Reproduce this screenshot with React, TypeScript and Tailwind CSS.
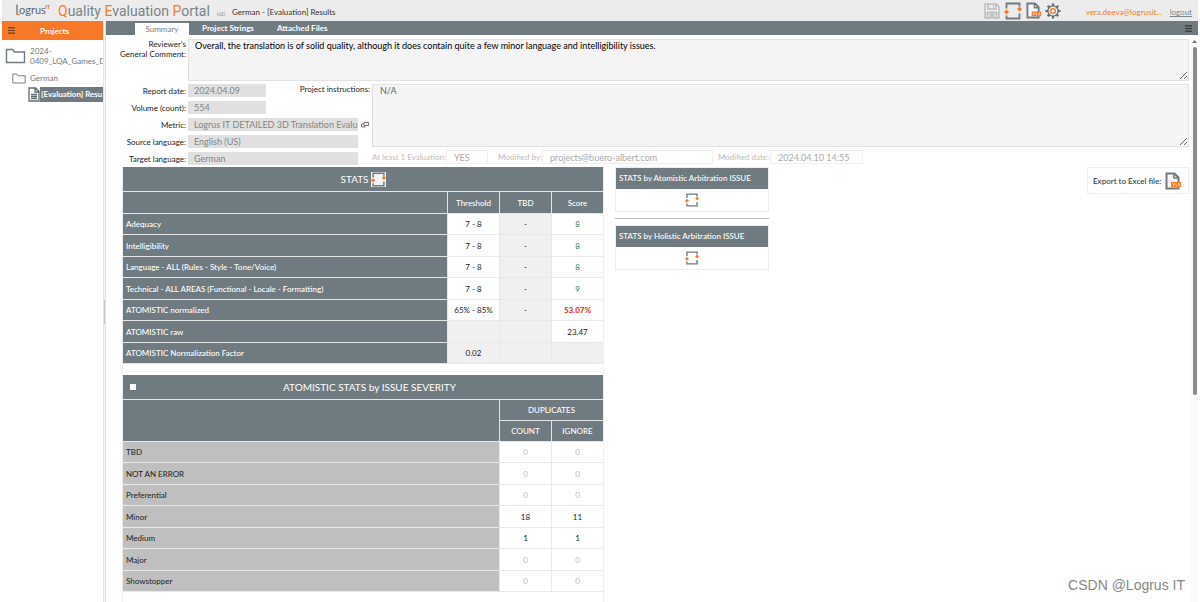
import { Menu } from "lucide-react";

type Tone = "plain" | "green" | "red";

interface StatRow {
  label: string;
  threshold: string;
  tbd: string;
  score: string;
  tone: Tone;
}

const statRows: StatRow[] = [
  { label: "Adequacy", threshold: "7 - 8", tbd: "-", score: "8", tone: "green" },
  { label: "Intelligibility", threshold: "7 - 8", tbd: "-", score: "8", tone: "green" },
  { label: "Language - ALL (Rules - Style - Tone/Voice)", threshold: "7 - 8", tbd: "-", score: "8", tone: "green" },
  { label: "Technical - ALL AREAS (Functional - Locale - Formatting)", threshold: "7 - 8", tbd: "-", score: "9", tone: "green" },
  { label: "ATOMISTIC normalized", threshold: "65% - 85%", tbd: "-", score: "53.07%", tone: "red" },
  { label: "ATOMISTIC raw", threshold: "", tbd: "", score: "23.47", tone: "plain" },
  { label: "ATOMISTIC Normalization Factor", threshold: "0.02", tbd: "", score: "", tone: "plain" },
];

const severityRows = [
  { label: "TBD", count: 0, ignore: 0 },
  { label: "NOT AN ERROR", count: 0, ignore: 0 },
  { label: "Preferential", count: 0, ignore: 0 },
  { label: "Minor", count: 18, ignore: 11 },
  { label: "Medium", count: 1, ignore: 1 },
  { label: "Major", count: 0, ignore: 0 },
  { label: "Showstopper", count: 0, ignore: 0 },
];

const fields = [
  { id: "report-date", label: "Report date:", value: "2024.04.09", width: "w-[78px]" },
  { id: "volume", label: "Volume (count):", value: "554", width: "w-[78px]" },
  { id: "metric", label: "Metric:", value: "Logrus IT DETAILED 3D Translation Evalu", width: "w-[170px]" },
  { id: "source", label: "Source language:", value: "English (US)", width: "w-[170px]" },
  { id: "target", label: "Target language:", value: "German", width: "w-[170px]" },
];

const toneClass: Record<Tone, string> = {
  plain: "text-[#222]",
  green: "text-[#1f7f55]",
  red: "text-[#e0202c] font-bold",
};

function RefreshIcon({ className }: { className: string }) {
  return (
    <svg viewBox="0 0 18 18" className={className} fill="none">
      <path d="M2.500 6.500V1.500h13v3M15.500 11.500v5h-13v-3" stroke="#6f7b80" strokeWidth="1.800" />
      <path d="M2.500 7.500 5 10l-2.500 2.500L0 10zM15.500 4.500 18 7l-2.500 2.500L13 7z" fill="#f47a2a" />
    </svg>
  );
}

function XlsIcon({ className }: { className: string }) {
  return (
    <svg viewBox="0 0 16 18" className={className} fill="none">
      <path d="M1.500 1.500h8l4 4v11h-12z" fill="#f7f7f7" stroke="#6f7b80" strokeWidth="2" />
      <path d="M9 1.500V6h4.500" stroke="#6f7b80" strokeWidth="1.600" />
      <path d="M6 10h10v5H6z" fill="#f47a2a" />
      <path d="m7.500 11.300 2 2.400m0-2.400-2 2.400M11 11.300v2.400h1.300M14.600 11.500h-1v1h1v1h-1.200" stroke="#fff" strokeWidth=".6" />
    </svg>
  );
}

function SaveIcon() {
  return (
    <svg viewBox="0 0 16 16" className="h-4 w-4" fill="none" stroke="#b9bdbf" strokeWidth="1.500">
      <path d="M1 1h11.500L15 3.500V15H1z" />
      <path d="M4 1v5h8V1M3.500 15V9.500h9V15M9.500 2.500v2M5.500 11.500h5M5.500 13.300h5" />
    </svg>
  );
}

function GearIcon() {
  const teeth = [0, 45, 90, 135, 180, 225, 270, 315];
  return (
    <svg viewBox="0 0 18 18" className="h-4 w-4" fill="none">
      {teeth.map((angle) => (
        <path key={angle} d="M9 .5v3" stroke="#5f6b70" strokeWidth="2.400" transform={`rotate(${angle} 9 9)`} />
      ))}
      <circle cx="9" cy="9" r="5.800" fill="#ececec" stroke="#5f6b70" strokeWidth="1.500" />
      <circle cx="9" cy="9" r="2.700" stroke="#f47a2a" strokeWidth="1.500" />
    </svg>
  );
}

function FolderIcon({ className }: { className: string }) {
  return (
    <svg viewBox="0 0 20 16" className={className} fill="none" stroke="#6f7b80" strokeWidth="1.400">
      <path d="M1 14.500V1.500h6l2 2.500h10v10.500z" />
    </svg>
  );
}

function Header() {
  return (
    <header className="flex h-[21px] shrink-0 items-center bg-[#ececec] pl-[12px] pr-[6px]">
      <svg viewBox="0 0 38 17" className="h-[17px] w-[38px]" aria-label="Logrus IT">
        <path d="M3 2.500v10" fill="none" stroke="#5d686d" strokeWidth="1.200" />
        <path d="M2.500 12.500H6" fill="none" stroke="#f47a2a" strokeWidth="1.200" />
        <text x="5" y="12" fontSize="11" fill="#5d686d" fontFamily="Lato, sans-serif">ogrus</text>
        <text x="31" y="7" fontSize="6" fontWeight="700" fill="#f47a2a" fontFamily="Lato, sans-serif">IT</text>
      </svg>
      <h1 className="ml-[6px] w-[159px] whitespace-nowrap font-[Roboto,sans-serif] text-[14px] leading-[18px] text-[#77858b]">
        <span className="text-[#f47a2a]">Q</span>uality <span className="text-[#f47a2a]">E</span>valuation{" "}
        <span className="text-[#f47a2a]">P</span>ortal
      </h1>
      <span className="mt-[6px] w-[15px] text-[5px] text-[#888]">(v2)</span>
      <span className="mt-[3px] text-[#333] whitespace-nowrap">German - [Evaluation] Results</span>
      <div className="ml-auto flex items-center gap-[4px]">
        <button type="button" aria-label="Save"><SaveIcon /></button>
        <button type="button" aria-label="Refresh"><RefreshIcon className="h-[18px] w-[18px]" /></button>
        <button type="button" aria-label="Export"><XlsIcon className="h-[17px] w-[15px]" /></button>
        <button type="button" aria-label="Settings"><GearIcon /></button>
      </div>
      <a href="#user" className="ml-[25px] mt-[3px] w-[77px] whitespace-nowrap text-[#f47a2a]">vera.deeva@logrusit...</a>
      <a href="#logout" className="ml-[7px] mt-[3px] text-[#7d888d] underline">logout</a>
    </header>
  );
}

function Sidebar() {
  return (
    <aside className="w-[101px] shrink-0 overflow-hidden bg-white text-[#6f7b80]">
      <div className="flex h-[19px] items-center bg-[#f67828] pl-[5px] text-white">
        <Menu className="h-[9px] w-[9px] text-[#6b3a1c]" strokeWidth={3} />
        <span className="ml-[24px] font-bold">Projects</span>
      </div>
      <div className="mt-[6px] flex items-center">
        <FolderIcon className="ml-[3px] h-[16px] w-[21px] shrink-0" />
        <p className="ml-[4px] leading-[10px]">2024-<br />0409_LQA_Games_D</p>
      </div>
      <div className="mt-[5px] flex h-[14px] items-center">
        <FolderIcon className="ml-[10px] h-[11px] w-[14px]" />
        <span className="ml-[4px]">German</span>
      </div>
      <div className="flex h-[18px] items-center">
        <svg viewBox="0 0 12 15" className="ml-[26px] h-[15px] w-[12px] shrink-0" fill="none" stroke="#5f6b70" strokeWidth="1.300">
          <path d="M1 1h6.500L11 4.500V14H1zM7 1v4h4M3 7.500h6M3 9.500h6M3 11.500h6" />
        </svg>
        <span className="h-[15px] flex-1 whitespace-nowrap bg-[#6f7b80] px-[1px] font-bold leading-[15px] text-white">[Evaluation] Resu</span>
      </div>
    </aside>
  );
}

function Details() {
  return (
    <div className="flex flex-col gap-[3px] pr-[2px]">
      <div className="flex gap-[2px]">
        <label htmlFor="comment" className="w-[80px] text-right leading-[10px]">Reviewer's<br />General Comment:</label>
        <textarea
          id="comment"
          readOnly
          defaultValue="Overall, the translation is of solid quality, although it does contain quite a few minor language and intelligibility issues."
          className="h-[42px] flex-1 resize border border-[#e2e2e2] bg-[#f4f4f4] px-[6px] py-[1px] text-[9px] leading-[10px] text-black"
        />
      </div>
      <div className="flex">
        <div className="flex w-[266px] shrink-0 flex-col gap-[4px]">
          {fields.map((field) => (
            <div key={field.id} className="flex h-[13px] items-center gap-[2px]">
              <label htmlFor={field.id} className="w-[80px] text-right">{field.label}</label>
              <input id={field.id} readOnly value={field.value} className={`h-[13px] rounded-[1px] bg-[#e0e0e0] pl-[6px] text-[9px] text-[#858585] ${field.width}`} />
              {field.id === "metric" && (
                <svg viewBox="0 0 8 6" className="ml-[1px] h-[6px] w-[8px]" fill="none" stroke="#555" strokeWidth=".8">
                  <path d="M3 .5h4.500v3H3zM3 2H.5v3H4V3.500" />
                </svg>
              )}
            </div>
          ))}
        </div>
        <div className="min-w-0 flex-1">
          <div className="flex">
            <label htmlFor="instructions" className="-ml-[80px] w-[80px] pr-[2px] text-right leading-[10px]">Project instructions:</label>
            <textarea id="instructions" readOnly defaultValue="N/A" className="h-[63px] flex-1 resize border border-[#e2e2e2] bg-[#f4f4f4] px-[7px] py-[1px] text-[9px] leading-[10px] text-[#666]" />
          </div>
          <div className="mt-[3px] flex h-[14px] items-center whitespace-nowrap text-[#bdbdbd]">
            <label htmlFor="evaluated" className="w-[74px]">At least 1 Evaluation:</label>
            <input id="evaluated" readOnly value="YES" className="h-[14px] w-[42px] border border-[#f0f0f0] px-[7px] text-[9px] text-[#aaa]" />
            <label htmlFor="modified-by" className="ml-[10px] w-[44px]">Modified by:</label>
            <input id="modified-by" readOnly value="projects@buero-albert.com" className="h-[14px] w-[171px] border border-[#f0f0f0] px-[7px] text-[9px] text-[#aaa]" />
            <label htmlFor="modified-date" className="ml-[5px] w-[52px]">Modified date:</label>
            <input id="modified-date" readOnly value="2024.04.10 14:55" className="h-[14px] w-[93px] border border-[#f0f0f0] px-[7px] text-[9px] text-[#aaa]" />
          </div>
        </div>
      </div>
    </div>
  );
}

function StatsTable() {
  return (
    <table className="w-full table-fixed border-separate border-spacing-0">
      <colgroup>
        <col />
        <col className="w-[52px]" />
        <col className="w-[52px]" />
        <col className="w-[52px]" />
      </colgroup>
      <thead className="bg-[#6f7b80] text-white">
        <tr className="h-[25px]">
          <th colSpan={4} className="border-b border-[#e4e7e8] text-[10px] font-normal leading-[14px]">
            <span className="flex items-center justify-center gap-[2px]">
              STATS
              <button type="button" aria-label="Refresh stats" className="bg-[#f4f4f4]"><RefreshIcon className="h-[15px] w-[15px]" /></button>
            </span>
          </th>
        </tr>
        <tr className="h-[22px]">
          <th className="border-b border-[#e4e7e8]" />
          <th className="border-b border-l border-[#e4e7e8] font-medium">Threshold</th>
          <th className="border-b border-l border-[#e4e7e8] font-medium">TBD</th>
          <th className="border-b border-l border-[#e4e7e8] font-medium">Score</th>
        </tr>
      </thead>
      <tbody className="text-center">
        {statRows.map((row) => (
          <tr key={row.label} className="h-[21px] even:h-[22px]">
            <th className="border-b border-[#e4e7e8] bg-[#6f7b80] px-[3px] text-left font-medium text-white">{row.label}</th>
            <td className={`border-b border-l border-[#e8e8e8] ${row.tbd ? "bg-white" : "bg-[#f0f0f0]"}`}>{row.threshold}</td>
            <td className="border-b border-l border-[#e8e8e8] bg-[#f0f0f0]">{row.tbd}</td>
            <td className={`border-b border-l border-[#e8e8e8] ${row.score ? "bg-white" : "bg-[#f0f0f0]"} ${toneClass[row.tone]}`}>{row.score}</td>
          </tr>
        ))}
      </tbody>
    </table>
  );
}

function SeverityTable() {
  return (
    <table className="mt-[11px] w-full table-fixed border-separate border-spacing-0">
      <colgroup>
        <col />
        <col className="w-[52px]" />
        <col className="w-[52px]" />
      </colgroup>
      <thead className="bg-[#6f7b80] text-white">
        <tr className="h-[25px]">
          <th colSpan={3} className="border-b border-[#e4e7e8] text-[10px] font-normal leading-[14px]">
            <span className="flex items-center pl-[7px]">
              <input type="checkbox" aria-label="Select severity stats" className="h-[6px] w-[6px] appearance-none bg-white" />
              <span className="flex-1">ATOMISTIC STATS by ISSUE SEVERITY</span>
            </span>
          </th>
        </tr>
        <tr className="h-[21px]">
          <th rowSpan={2} className="border-b border-[#e4e7e8]" />
          <th colSpan={2} className="border-b border-l border-[#e4e7e8] font-medium">DUPLICATES</th>
        </tr>
        <tr className="h-[21px]">
          <th className="border-b border-l border-[#e4e7e8] font-medium">COUNT</th>
          <th className="border-b border-l border-[#e4e7e8] font-medium">IGNORE</th>
        </tr>
      </thead>
      <tbody className="text-center">
        {severityRows.map((row) => (
          <tr key={row.label} className="h-[21px] even:h-[22px]">
            <th className="border-b border-[#e8e8e8] bg-[#bfbfbf] px-[3px] text-left font-normal">{row.label}</th>
            <td className={`border-b border-l border-[#e8e8e8] ${row.count ? "text-[#222]" : "text-[#bbb]"}`}>{row.count}</td>
            <td className={`border-b border-l border-[#e8e8e8] ${row.ignore ? "text-[#222]" : "text-[#bbb]"}`}>{row.ignore}</td>
          </tr>
        ))}
      </tbody>
    </table>
  );
}

function ArbitrationPanel({ title }: { title: string }) {
  return (
    <section className="border border-[#eee]">
      <h2 className="h-[21px] bg-[#6f7b80] px-[3px] font-medium leading-[21px] text-white">{title}</h2>
      <div className="flex h-[22px] items-center justify-center">
        <button type="button" aria-label={`Refresh ${title}`}><RefreshIcon className="h-[14px] w-[14px]" /></button>
      </div>
    </section>
  );
}

export default function App() {
  return (
    <div className="relative flex h-screen flex-col overflow-hidden bg-white px-[2px] font-[Lato,sans-serif] text-[8px] leading-[12px] text-[#222]">
      <Header />
      <div className="flex min-h-0 flex-1">
        <Sidebar />
        <div className="flex w-[3px] shrink-0 items-center border-x border-[#e4e4e4] bg-[#f4f4f4]">
          <span className="h-[24px] w-full bg-[#c4c4c4]" />
        </div>
        <main className="flex min-w-0 flex-1 flex-col">
          <nav className="flex h-[14px] shrink-0 items-center whitespace-nowrap bg-[#6f7b80] pl-[29px] pr-[5px] font-bold text-white">
            <a href="#summary" className="h-[12px] w-[54px] self-end bg-white text-center font-normal text-[#6f7b80]">Summary</a>
            <a href="#strings" className="ml-[13px] w-[52px]">Project Strings</a>
            <a href="#files" className="ml-[23px]">Attached Files</a>
            <Menu className="ml-auto h-[9px] w-[9px] text-[#333]" strokeWidth={3} />
          </nav>
          <div className="flex min-h-0 flex-1">
            <div className="min-w-0 flex-1 overflow-hidden pt-[4px]">
              <Details />
              <div className="mt-[2px] flex items-start pl-[16px] pr-[2px]">
                <div className="h-[440px] w-[482px] border-x border-[#eee]">
                  <StatsTable />
                  <SeverityTable />
                </div>
                <div className="ml-[11px] w-[154px]">
                  <ArbitrationPanel title="STATS by Atomistic Arbitration ISSUE" />
                  <hr className="my-[6px] border-[#bbb]" />
                  <ArbitrationPanel title="STATS by Holistic Arbitration ISSUE" />
                </div>
                <button type="button" className="ml-auto flex h-[27px] w-[102px] items-center justify-between border border-[#eee] pl-[5px] pr-[7px] font-medium text-[#2a4040]">
                  Export to Excel file:
                  <XlsIcon className="h-[18px] w-[16px]" />
                </button>
              </div>
            </div>
            <div className="flex w-[7px] shrink-0 flex-col items-center bg-[#fafafa] pt-[5px]">
              <svg viewBox="0 0 5 3" className="h-[3px] w-[5px]"><path d="M0 3 2.500 0 5 3z" fill="#777" /></svg>
              <span className="mt-[4px] h-[62%] w-[4px] rounded-full bg-[#8a8a8a]" />
            </div>
          </div>
        </main>
      </div>
      <p className="absolute bottom-[8px] right-[15px] font-['Liberation_Sans',sans-serif] text-[14px] leading-[18px] text-[#888]">CSDN @Logrus IT</p>
    </div>
  );
}
